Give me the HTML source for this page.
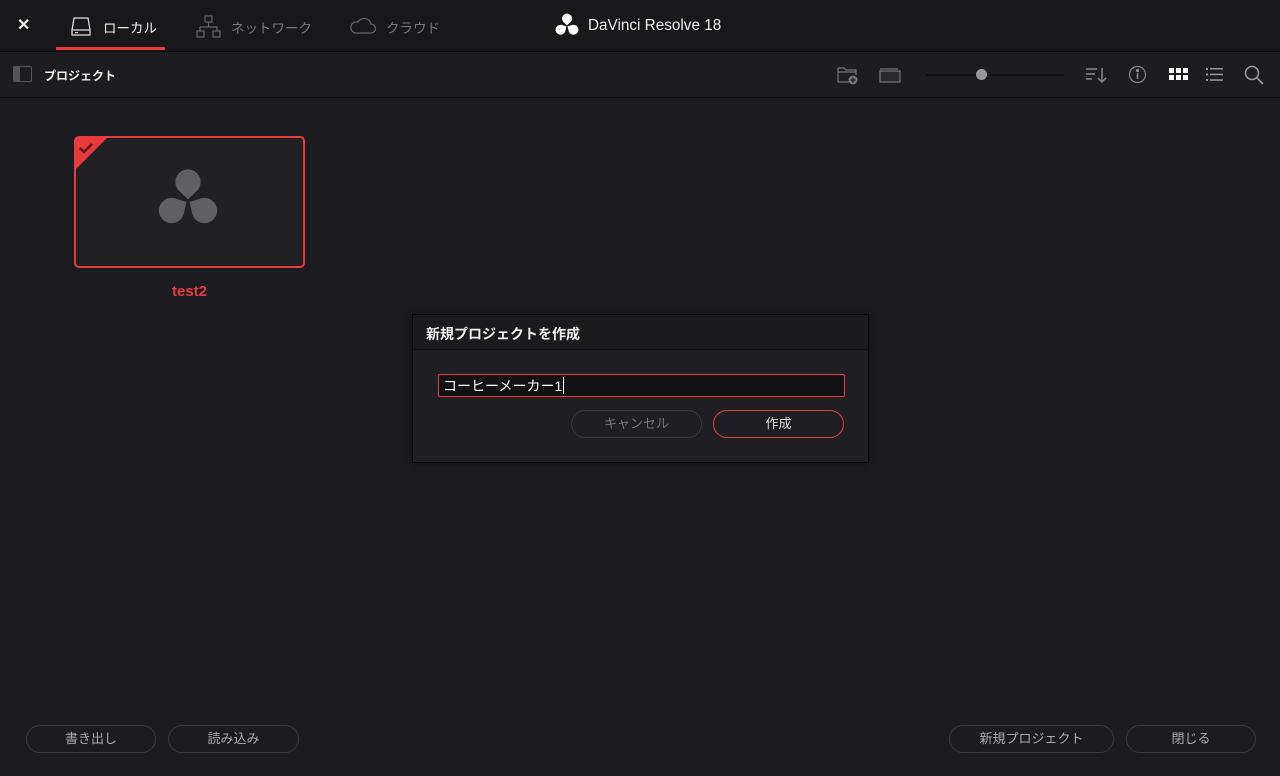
<!DOCTYPE html>
<html><head><meta charset="utf-8"><style>
*{margin:0;padding:0;box-sizing:border-box}
body{width:1280px;height:776px;background:#1c1c20;font-family:"Liberation Sans","Noto Sans CJK JP",sans-serif;position:relative;overflow:hidden;color:#ddd}
.top{position:absolute;left:0;top:0;width:1280px;height:52px;background:#18181b;border-bottom:1px solid #0c0c0e}
.bar2{position:absolute;left:0;top:52px;width:1280px;height:46px;background:#1d1d21;border-bottom:1px solid #0c0c0e}
.a{position:absolute}
.tab{position:absolute;top:17px;font-size:13.5px}
.btn{position:absolute;height:28px;border:1px solid #3a3a3f;border-radius:14px;color:#aaa;font-size:13px;text-align:center;line-height:26px;background:#1c1c20}
</style></head><body>
<div class="top"></div>
<div class="bar2"></div>
<div class="a" style="left:17px;top:15px;font-size:16px;color:#eee;font-weight:bold">✕</div>
<svg class="a" style="left:70px;top:15px" width="22" height="22" viewBox="0 0 22 22" fill="none" stroke="#ddd" stroke-width="1.3"><path d="M4 3h14l2 12v5H2v-5z"/><path d="M2 15h18"/><rect x="5" y="17" width="3" height="1.2" fill="#ddd" stroke="none"/></svg>
<div class="tab" style="left:103px;color:#eee">ローカル</div>
<div class="a" style="left:56px;top:47px;width:109px;height:3px;background:#e63c3f"></div>
<svg class="a" style="left:196px;top:15px" width="26" height="24" viewBox="0 0 26 24" fill="none" stroke="#666" stroke-width="1.2"><rect x="9" y="1" width="7" height="6"/><path d="M12.5 7v5M4 12h17v4M4 12v4"/><rect x="1" y="16" width="7" height="6"/><rect x="17" y="16" width="7" height="6"/></svg>
<div class="tab" style="left:231px;color:#777">ネットワーク</div>
<svg class="a" style="left:349px;top:17px" width="28" height="18" viewBox="0 0 28 18" fill="none" stroke="#666" stroke-width="1.2"><path d="M6 16h16a4.5 4.5 0 0 0 0-9 7 7 0 0 0-13-2A5.5 5.5 0 0 0 6 16z"/></svg>
<div class="tab" style="left:386px;color:#777">クラウド</div>
<svg class="a" style="left:554px;top:13px" width="26" height="26" viewBox="-12 -12 24 24" fill="#fff"><path d="M0,-0.6 L-3.4,-3.8 A4.6,4.6 0 1 1 3.4,-3.8 Z"/><path transform="rotate(120)" d="M0,-0.6 L-3.4,-3.8 A4.6,4.6 0 1 1 3.4,-3.8 Z"/><path transform="rotate(240)" d="M0,-0.6 L-3.4,-3.8 A4.6,4.6 0 1 1 3.4,-3.8 Z"/></svg>
<div class="a" style="left:588px;top:17px;font-size:15.3px;color:#eee">DaVinci Resolve 18</div>

<div class="a" style="left:13px;top:66px;width:19px;height:16px;border:1px solid #555;border-radius:2px"><div style="width:6px;height:14px;background:#555"></div></div>
<div class="a" style="left:44px;top:67px;font-size:12px;font-weight:bold;color:#eee">プロジェクト</div>

<svg class="a" style="left:836px;top:64px" width="24" height="22" viewBox="0 0 24 22" fill="none" stroke="#777" stroke-width="1.2"><path d="M2 4h6l2 2h10v5M2 4v14h11"/><path d="M2 8h18"/><circle cx="17" cy="16" r="4.5" fill="#777" stroke="none"/><path d="M17 13.5v5M14.5 16h5" stroke="#1d1d21" stroke-width="1.4"/></svg>
<svg class="a" style="left:878px;top:66px" width="24" height="18" viewBox="0 0 24 18" fill="none" stroke="#777" stroke-width="1.2"><path d="M2 3h18"/><rect x="2" y="5" width="20" height="11" fill="#2a2a2e"/></svg>
<div class="a" style="left:926px;top:74px;width:138px;height:2px;background:#111"></div>
<div class="a" style="left:976px;top:69px;width:11px;height:11px;border-radius:50%;background:#999"></div>
<svg class="a" style="left:1084px;top:65px" width="26" height="20" viewBox="0 0 26 20" fill="none" stroke="#888" stroke-width="1.5"><path d="M2 4h11M2 9h9M2 14h6M18 3v14M14 13l4 4 4-4"/></svg>
<svg class="a" style="left:1128px;top:65px" width="19" height="19" viewBox="0 0 19 19" fill="none" stroke="#888" stroke-width="1.2"><circle cx="9.5" cy="9.5" r="8"/><path d="M9.5 8v6" stroke-width="1.6"/><circle cx="9.5" cy="5.5" r="1" fill="#888"/></svg>
<svg class="a" style="left:1169px;top:68px" width="20" height="14" viewBox="0 0 20 14" fill="#fff"><rect x="0" y="0" width="5" height="5"/><rect x="7" y="0" width="5" height="5"/><rect x="14" y="0" width="5" height="5"/><rect x="0" y="7" width="5" height="5"/><rect x="7" y="7" width="5" height="5"/><rect x="14" y="7" width="5" height="5"/></svg>
<svg class="a" style="left:1206px;top:67px" width="18" height="16" viewBox="0 0 18 16" fill="#999"><rect x="0" y="1" width="2" height="2"/><rect x="4" y="1" width="13" height="1.5"/><rect x="0" y="6.5" width="2" height="2"/><rect x="4" y="6.7" width="13" height="1.5"/><rect x="0" y="12" width="2" height="2"/><rect x="4" y="12.3" width="13" height="1.5"/></svg>
<svg class="a" style="left:1243px;top:64px" width="22" height="22" viewBox="0 0 22 22" fill="none" stroke="#999" stroke-width="1.6"><circle cx="9" cy="9" r="6.5"/><path d="M14 14l6 6"/></svg>

<div class="a" style="left:74px;top:136px;width:231px;height:132px;border:2px solid #e63c3f;border-radius:5px;background:#1a1a1c"><div style="position:absolute;inset:1px;background:#212123;border-radius:2px"></div></div>
<svg class="a" style="left:76px;top:138px" width="32" height="32" viewBox="0 0 32 32"><path d="M0 0h31L0 31z" fill="#e63c3f"/><path d="M4 10l4 4 8-8" fill="none" stroke="#5a0f12" stroke-width="2.4"/></svg>
<svg class="a" style="left:155px;top:168px" width="66" height="66" viewBox="-12 -12 24 24" fill="#606062"><path d="M0,-0.6 L-3.4,-3.8 A4.6,4.6 0 1 1 3.4,-3.8 Z"/><path transform="rotate(120)" d="M0,-0.6 L-3.4,-3.8 A4.6,4.6 0 1 1 3.4,-3.8 Z"/><path transform="rotate(240)" d="M0,-0.6 L-3.4,-3.8 A4.6,4.6 0 1 1 3.4,-3.8 Z"/></svg>
<div class="a" style="left:74px;top:283px;width:231px;text-align:center;font-size:15px;font-weight:bold;color:#e63c3f">test2</div>

<div class="a" style="left:412px;top:314px;width:457px;height:149px;background:#1f1f23;border:1px solid #000;box-shadow:0 0 6px rgba(0,0,0,.6)">
 <div style="height:35px;background:#1b1b1e;border-bottom:1px solid #0e0e10;padding:9px 0 0 13px;font-size:14px;font-weight:bold;color:#eee">新規プロジェクトを作成</div>
 <div style="position:absolute;left:25px;top:59px;width:407px;height:23px;border:1px solid #e63c3f;border-radius:2px;background:#121214;font-size:14px;color:#fff;padding:1px 0 0 4px">コーヒーメーカー1<span style="display:inline-block;width:1px;height:17px;background:#fff;vertical-align:-3px;margin-left:1px"></span></div>
 <div class="btn" style="left:158px;top:95px;width:131px;color:#777;background:#1f1f23">キャンセル</div>
 <div class="btn" style="left:300px;top:95px;width:131px;border:1px solid #e63c3f;color:#ddd;background:#1f1f23">作成</div>
</div>

<div class="btn" style="left:26px;top:725px;width:130px">書き出し</div>
<div class="btn" style="left:168px;top:725px;width:131px">読み込み</div>
<div class="btn" style="left:949px;top:725px;width:165px">新規プロジェクト</div>
<div class="btn" style="left:1126px;top:725px;width:130px">閉じる</div>
</body></html>
